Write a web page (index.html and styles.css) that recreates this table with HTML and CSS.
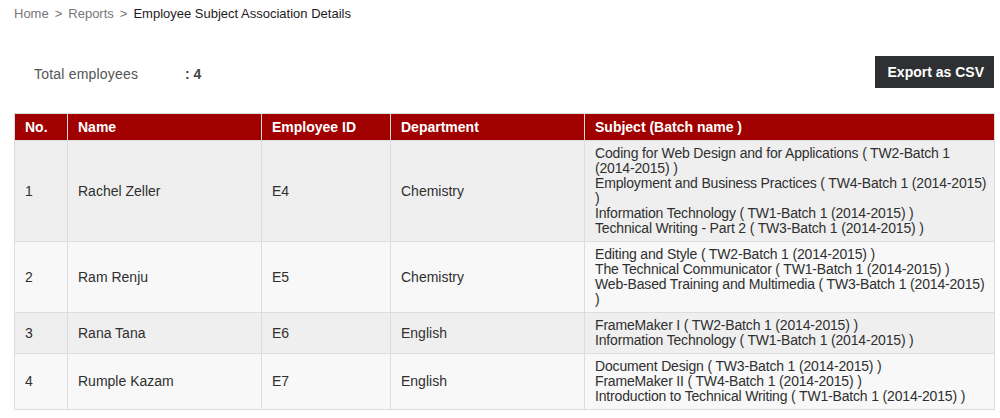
FILE: index.html
```html
<!DOCTYPE html>
<html>
<head>
<meta charset="utf-8">
<title>Employee Subject Association Details</title>
<link rel="stylesheet" href="styles.css">
</head>
<body>
<div class="page">
  <div class="breadcrumb">
    <a class="crumb" href="#">Home</a><span class="sep">&gt;</span><a class="crumb" href="#">Reports</a><span class="sep">&gt;</span><span class="current">Employee Subject Association Details</span>
  </div>
  <div class="toolbar">
    <div class="total"><span class="total-label">Total employees</span><span class="total-value">: 4</span></div>
    <button class="export-btn" type="button">Export as CSV</button>
  </div>
  <table class="report">
    <colgroup>
      <col class="c-no"><col class="c-name"><col class="c-id"><col class="c-dept"><col class="c-subj">
    </colgroup>
    <thead>
      <tr><th>No.</th><th>Name</th><th>Employee ID</th><th>Department</th><th>Subject (Batch name )</th></tr>
    </thead>
    <tbody>
      <tr class="odd">
        <td>1</td><td>Rachel Zeller</td><td>E4</td><td>Chemistry</td>
        <td class="subjects">Coding for Web Design and for Applications ( <span class="nb">TW2-Batch</span> 1 <span class="nb">(2014-2015)</span> )<br>Employment and Business Practices ( <span class="nb">TW4-Batch</span> 1 <span class="nb">(2014-2015)</span> )<br>Information Technology ( <span class="nb">TW1-Batch</span> 1 <span class="nb">(2014-2015)</span> )<br>Technical Writing - Part 2 ( <span class="nb">TW3-Batch</span> 1 <span class="nb">(2014-2015)</span> )</td>
      </tr>
      <tr class="even">
        <td>2</td><td>Ram Renju</td><td>E5</td><td>Chemistry</td>
        <td class="subjects">Editing and Style ( <span class="nb">TW2-Batch</span> 1 <span class="nb">(2014-2015)</span> )<br>The Technical Communicator ( <span class="nb">TW1-Batch</span> 1 <span class="nb">(2014-2015)</span> )<br><span class="nb">Web-Based</span> Training and Multimedia ( <span class="nb">TW3-Batch</span> 1 <span class="nb">(2014-2015)</span> )</td>
      </tr>
      <tr class="odd">
        <td>3</td><td>Rana Tana</td><td>E6</td><td>English</td>
        <td class="subjects">FrameMaker I ( <span class="nb">TW2-Batch</span> 1 <span class="nb">(2014-2015)</span> )<br>Information Technology ( <span class="nb">TW1-Batch</span> 1 <span class="nb">(2014-2015)</span> )</td>
      </tr>
      <tr class="even">
        <td>4</td><td>Rumple Kazam</td><td>E7</td><td>English</td>
        <td class="subjects">Document Design ( <span class="nb">TW3-Batch</span> 1 <span class="nb">(2014-2015)</span> )<br>FrameMaker II ( <span class="nb">TW4-Batch</span> 1 <span class="nb">(2014-2015)</span> )<br>Introduction to Technical Writing ( <span class="nb">TW1-Batch</span> 1 <span class="nb">(2014-2015)</span> )</td>
      </tr>
    </tbody>
  </table>
</div>
</body>
</html>
```
FILE: styles.css
```css
html, body {
  margin: 0;
  padding: 0;
  background: #ffffff;
}
body {
  font-family: Arial, "Liberation Sans", sans-serif;
  color: #333333;
}
.page {
  padding: 6px 7px 0 14px;
}
.breadcrumb {
  font-size: 13px;
  line-height: 15px;
  height: 15px;
  color: #777777;
}
.crumb {
  color: #777777;
  text-decoration: none;
}
.sep {
  margin: 0 6px;
  color: #777777;
}
.current {
  color: #1f1a22;
}
.toolbar {
  margin-top: 35px;
  display: flex;
  justify-content: space-between;
  align-items: center;
  height: 32px;
}
.total {
  padding-left: 20px;
  padding-top: 4px;
  font-size: 14px;
  line-height: 16px;
  color: #555555;
  letter-spacing: 0.2px;
}
.total-label {
  display: inline-block;
  width: 151px;
}
.total-value {
  font-weight: bold;
  color: #444444;
  letter-spacing: 0;
}
.export-btn {
  height: 32px;
  margin: 0 -1px 0 0;
  padding: 0 10px 0 13px;
  border: 0;
  background: #2e3033;
  color: #ffffff;
  font-family: Arial, "Liberation Sans", sans-serif;
  font-size: 14px;
  font-weight: bold;
  cursor: pointer;
}
.report {
  margin-top: 25px;
  width: 980px;
  border-collapse: collapse;
  table-layout: fixed;
  font-size: 14px;
}
.c-no { width: 53px; }
.c-name { width: 194px; }
.c-id { width: 129px; }
.c-dept { width: 194px; }
.c-subj { width: 410px; }
.report th {
  background: #a00000;
  color: #ffffff;
  font-weight: bold;
  text-align: left;
  line-height: 16px;
  padding: 5px 10px;
  border: 1px solid #dddddd;
}
.report td {
  line-height: 15px;
  padding: 5px 10px;
  border: 1px solid #dddddd;
  vertical-align: middle;
  color: #2f2f2f;
}
.report td.subjects {
  padding-right: 4px;
  letter-spacing: -0.17px;
}
.nb {
  white-space: nowrap;
}
.report tr.odd td {
  background: #efefef;
}
.report tr.even td {
  background: #f8f8f8;
}
```
